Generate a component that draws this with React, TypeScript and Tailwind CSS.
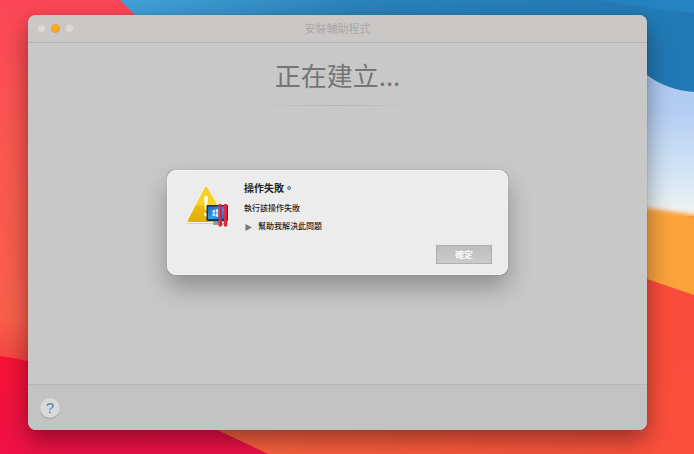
function Wallpaper() {
  return (
    <svg
      aria-hidden="true"
      className="absolute inset-0 h-full w-full"
      viewBox="0 0 694 454"
      preserveAspectRatio="none"
    >
      <defs>
        <linearGradient id="coral" x1="0" y1="0" x2="0" y2="1">
          <stop offset="0" stopColor="#fc4657" />
          <stop offset="0.3" stopColor="#fb5750" />
          <stop offset="0.7" stopColor="#f95f4b" />
          <stop offset="0.8" stopColor="#f2443f" />
        </linearGradient>
        <linearGradient id="crimson" x1="0" y1="0" x2="0.4" y2="1">
          <stop offset="0" stopColor="#f61236" />
          <stop offset="1" stopColor="#ee1147" />
        </linearGradient>
        <linearGradient id="blue" x1="0" y1="0" x2="1" y2="0.3">
          <stop offset="0" stopColor="#43a2db" />
          <stop offset="0.4" stopColor="#2a82bd" />
          <stop offset="1" stopColor="#2079b5" />
        </linearGradient>
        <linearGradient id="sky" x1="0" y1="0" x2="0" y2="1">
          <stop offset="0" stopColor="#a9c3ef" />
          <stop offset="0.4" stopColor="#b4cdf2" />
          <stop offset="0.8" stopColor="#d6e8f6" />
          <stop offset="1" stopColor="#f3f3f0" />
        </linearGradient>
        <linearGradient id="ember" x1="0" y1="1" x2="1" y2="0">
          <stop offset="0" stopColor="#f9673f" />
          <stop offset="0.5" stopColor="#fb4f3b" />
          <stop offset="1" stopColor="#fb4b3b" />
        </linearGradient>
        <filter id="soft" x="-20%" y="-20%" width="140%" height="140%">
          <feGaussianBlur stdDeviation="2" />
        </filter>
      </defs>
      <rect width="694" height="454" fill="url(#coral)" />
      <path d="M0 356 Q14 358 28 361 L120 370 L270 454 H0Z" fill="url(#crimson)" />
      <path d="M120 0 H694 V140 H260Z" fill="url(#blue)" />
      <path d="M596 0 H694 V13 Q650 9 596 0Z" fill="#2583c1" />
      <path d="M600 40 L647 75 Q667 90 694 92 V216 H600Z" fill="url(#sky)" />
      <path d="M600 203 L647 208 L704 216 V300 H600Z" fill="#fba33b" filter="url(#soft)" />
      <path d="M165 405 L600 260 L647 279 L694 295 V454 H268Z" fill="url(#ember)" />
    </svg>
  );
}

function TitleBar() {
  return (
    <header className="relative flex h-7 items-center justify-center border-b border-[#b4b3b3] bg-[#cac7c7]">
      <div className="absolute left-[9px] flex gap-[5px]">
        <button aria-label="關閉" className="size-[9px] rounded-full border border-[#cfcdcb] bg-[#dcdad8]" />
        <button aria-label="縮到最小" className="size-[9px] rounded-full border border-[#e9a02a] bg-[#fbaa1c]" />
        <button aria-label="縮放" className="size-[9px] rounded-full border border-[#cfcdcb] bg-[#dcdad8]" />
      </div>
      <h1 className="text-[11px] leading-4 text-[#aaa8a8]">安裝輔助程式</h1>
    </header>
  );
}

function WarningIcon() {
  return (
    <svg aria-hidden="true" className="mt-1 h-[44px] w-[46px] shrink-0" viewBox="0 0 46 44">
      <defs>
        <linearGradient id="warn" x1="0" y1="0" x2="0" y2="1">
          <stop offset="0" stopColor="#efce38" />
          <stop offset="0.5" stopColor="#fad31f" />
          <stop offset="0.55" stopColor="#e9bb12" />
          <stop offset="1" stopColor="#e3ac0c" />
        </linearGradient>
        <linearGradient id="screen" x1="0" y1="0" x2="1" y2="1">
          <stop offset="0" stopColor="#1767c5" />
          <stop offset="0.55" stopColor="#399cf2" />
          <stop offset="1" stopColor="#135cba" />
        </linearGradient>
      </defs>
      <path d="M18 1.5 Q20.5 -0.5 23 2.5 L41 35 Q42 39 38 39 H3 Q-0.5 39 0.5 36Z" fill="#cfcfcf" />
      <path
        d="M18 2.5 Q20 0 22 2.5 L40 34 Q41 37.5 37.5 37.5 H3 Q0.5 37.5 1.5 34.5Z"
        fill="url(#warn)"
        stroke="#f7f6ef"
        strokeWidth="1.2"
        strokeLinejoin="round"
      />
      <path d="M18 12 Q20 9.5 22 12 L21 25 H19Z" fill="#fff8dc" />
      <circle cx="20" cy="29.5" r="2" fill="#fff8dc" />
      <path d="M28 35 H35 L36 39 H27Z" fill="#8d9294" />
      <path d="M27 38 H37 V40 H27Z" fill="#9a9d9f" />
      <rect x="20.5" y="20" width="21.5" height="16" rx="1" fill="#26313f" />
      <rect x="22" y="21.5" width="18" height="12.5" fill="url(#screen)" />
      <path
        d="M26.5 25.5 L29 24.8 V27.5 H26.5Z M29.8 24.5 L32.3 24 V27.5 H29.8Z M26.5 28.5 H29 V31.3 L26.5 30.6Z M29.8 28.5 H32.3 V32 L29.8 31.5Z"
        fill="#d5efff"
      />
      <rect x="32.5" y="19" width="3.4" height="22.5" rx="1" fill="#d91f32" />
      <rect x="37.8" y="19" width="3.4" height="22.5" rx="1" fill="#d91f32" />
      <path d="M33.7 20.5 V40.5 M39 20.5 V40.5" stroke="#f05261" strokeWidth="0.6" />
    </svg>
  );
}

function FailureDialog() {
  return (
    <section
      role="alertdialog"
      aria-labelledby="failure-title"
      aria-describedby="failure-text"
      className="flex w-[341px] rounded-lg border border-[#f3f3f3] bg-[#ececec] pt-[10px] pr-[15px] pb-[10px] pl-[18px] text-[#242424] shadow-[0_0_1px_rgba(0,0,0,0.5),0_13px_24px_rgba(0,0,0,0.28)]"
    >
      <WarningIcon />
      <div className="flex flex-1 flex-col pl-3">
        <h3 id="failure-title" className="text-[10px] leading-4 font-bold">操作失敗。</h3>
        <p id="failure-text" className="mt-1 text-[8px] leading-4 font-medium">執行該操作失敗</p>
        <button className="mt-[2px] flex items-center gap-[6px] text-[8px] leading-4 font-medium">
          <svg aria-hidden="true" className="ml-px size-[7px] fill-[#777777]" viewBox="0 0 7 7">
            <path d="M0.5 0 L7 3.5 L0.5 7Z" />
          </svg>
          幫助我解決此問題
        </button>
        <button className="mt-[10px] h-[19px] w-14 self-end border border-[#b0b0b0] bg-linear-to-b from-[#bdbdbd] to-[#cbcbcb] text-[9px] leading-4 font-bold text-[#f7f7f7]">
          確定
        </button>
      </div>
    </section>
  );
}

export default function App() {
  return (
    <div className="relative flex min-h-screen overflow-hidden pt-[15px] pr-[47px] pb-6 pl-7 font-['Liberation_Sans','Noto_Sans_CJK_TC',sans-serif]">
      <Wallpaper />
      <div className="relative flex flex-1 flex-col rounded-lg shadow-[0_0_1px_rgba(0,0,0,0.4),0_10px_24px_rgba(0,0,0,0.4)]">
        <div className="flex flex-1 flex-col overflow-hidden rounded-lg bg-[#c8c8c8]">
          <TitleBar />
          <main className="flex flex-1 flex-col items-center pt-[14px]">
            <h2 className="font-['Noto_Sans_CJK_TC',sans-serif] text-[26px] leading-9 font-normal text-[#757575]">正在建立...</h2>
            <div className="mt-3 h-px w-[168px] bg-linear-to-r from-transparent via-[#b6b6b6] to-transparent" />
          </main>
          <footer className="flex h-[46px] items-center border-t border-[#b5b7b7] bg-[#c3c3c3] px-3">
            <button
              aria-label="輔助說明"
              className="size-5 rounded-full bg-[#d9d9d9] text-[15px] leading-5 text-[#5286bd] shadow-[0_1px_1px_rgba(0,0,0,0.2)]"
            >
              ?
            </button>
          </footer>
        </div>
        <div className="absolute inset-x-0 top-[155px] flex justify-center">
          <FailureDialog />
        </div>
      </div>
    </div>
  );
}
